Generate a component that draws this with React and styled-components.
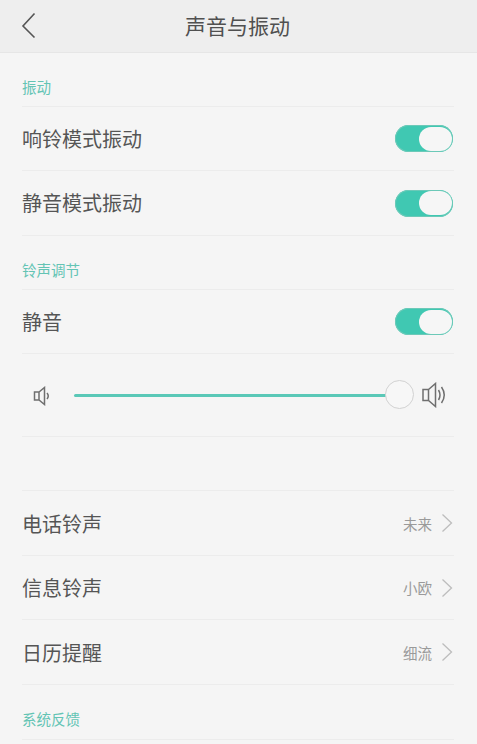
import React from "react";
import styled, { createGlobalStyle } from "styled-components";

const Global = createGlobalStyle`
  html, body { margin: 0; padding: 0; background: #f5f5f5; }
  body { font-family: "Noto Sans CJK SC", "Liberation Sans", sans-serif; }
`;
const Page = styled.div`
  width: 477px; height: 744px; overflow: hidden; background: #f5f5f5; display: flex; flex-direction: column;
`;
const Header = styled.header`
  height: 53px; flex: none; box-sizing: border-box; background: #eeeeee; border-bottom: 1px solid #e6e6e6;
  display: flex; align-items: center; justify-content: center; position: relative;
  padding: 0 2px 3px 0;
`;
const Title = styled.h1`
  margin: 0; font-size: 21px; font-weight: 400; color: #505050; line-height: 30px;
`;
const Back = styled.svg`
  position: absolute; left: 20px; top: 12px; width: 17px; height: 27px;
`;
const Body = styled.main`
  padding: 0 23px 0 22px; display: flex; flex-direction: column;
`;
const SectionLabel = styled.div`
  height: ${p => p.$h}px; box-sizing: border-box; display: flex; align-items: flex-end; padding-bottom: ${p => p.$pb || 10}px;
  font-size: 14.5px; line-height: 18px; color: #63c4b4; border-bottom: 1px solid #ececec;
`;
const Row = styled.div`
  height: ${p => p.$h || 65}px; box-sizing: border-box; flex: none; display: flex; align-items: center; justify-content: space-between;
  border-bottom: 1px solid #ececec; font-size: 20px; color: #555555;
`;
const RowText = styled.span`
  margin-bottom: ${p => p.$lift || 0}px;
`;
const Track = styled.span`
  width: 58px; height: 27px; margin-right: 1px; box-sizing: border-box; border-radius: 14px; background: #40c8b2;
  display: flex; justify-content: flex-end; align-items: center; padding-right: 1.5px;
  box-shadow: inset 0 0 0 1px #6cc9b8;
`;
const Knob = styled.span`
  width: 33px; height: 24px; border-radius: 12px; background: #f6f6f6;
`;
const SliderRow = styled(Row)`
  padding: 1px 7px 0 11px; height: 83px;
`;
const Line = styled.div`
  flex: 1; height: 3px; background: #5ac8b7; margin-left: 23px; position: relative; border-radius: 2px;
`;
const Thumb = styled.span`
  position: absolute; right: -14px; top: -14px; width: 29px; height: 29px; box-sizing: border-box;
  border-radius: 50%; border: 1.5px solid #d2d2d2; background: #f7f7f7;
`;
const Spacer = styled.div`
  height: 53px; flex: none; border-bottom: 1px solid #ececec;
`;
const Value = styled.span`
  display: flex; align-items: center; gap: 9px; font-size: 14.5px; color: #9a9a9a; padding-right: 1px;
`;
const Chevron = styled.svg`
  width: 12px; height: 20px; flex: none;
`;
const SpeakerSmall = styled.svg`
  width: 18px; height: 20px; flex: none;
`;
const SpeakerLarge = styled.svg`
  width: 25px; height: 26px; flex: none; margin-left: 22px; margin-bottom: 1px;
`;

const Toggle = () => <Track><Knob /></Track>;
const Arrow = () => (
  <Chevron viewBox="0 0 12 20"><path d="M1.5 1.5 L10.5 10 L1.5 18.5" fill="none" stroke="#bdbdbd" strokeWidth="1.3" /></Chevron>
);

export default function App() {
  return (
    <Page>
      <Global />
      <Header>
        <Back viewBox="0 0 17 27"><path d="M14.5 1.5 L3 14 L14.5 25.5" fill="none" stroke="#555" strokeWidth="1.6" /></Back>
        <Title>声音与振动</Title>
      </Header>
      <Body>
        <SectionLabel $h={54}>振动</SectionLabel>
        <Row $h={64}><RowText $lift={1}>响铃模式振动</RowText><Toggle /></Row>
        <Row><RowText $lift={2}>静音模式振动</RowText><Toggle /></Row>
        <SectionLabel $h={54}>铃声调节</SectionLabel>
        <Row $h={64}>静音<Toggle /></Row>
        <SliderRow>
          <SpeakerSmall viewBox="0 0 18 20">
            <path d="M1.5 6 H6 L11.5 1.5 V18.5 L6 14 H1.5 Z M6 6 V14" fill="none" stroke="#6f6f6f" strokeWidth="1.5" />
            <path d="M14 7 Q16.5 10 14 13" fill="none" stroke="#6f6f6f" strokeWidth="1.5" />
          </SpeakerSmall>
          <Line><Thumb /></Line>
          <SpeakerLarge viewBox="0 0 25 26">
            <path d="M1 7.5 H6.5 L13.5 1.5 V24.5 L6.5 18.5 H1 Z M6.5 7.5 V18.5" fill="none" stroke="#6f6f6f" strokeWidth="1.5" />
            <path d="M16.5 8 Q19.5 13 16.5 18 M19.5 5 Q25 13 19.5 21" fill="none" stroke="#6f6f6f" strokeWidth="1.5" />
          </SpeakerLarge>
        </SliderRow>
        <Spacer />
        <Row>电话铃声<Value>未来<Arrow /></Value></Row>
        <Row $h={64}>信息铃声<Value>小欧<Arrow /></Value></Row>
        <Row>日历提醒<Value>细流<Arrow /></Value></Row>
        <SectionLabel $h={55} $pb={11}>系统反馈</SectionLabel>
      </Body>
    </Page>
  );
}
